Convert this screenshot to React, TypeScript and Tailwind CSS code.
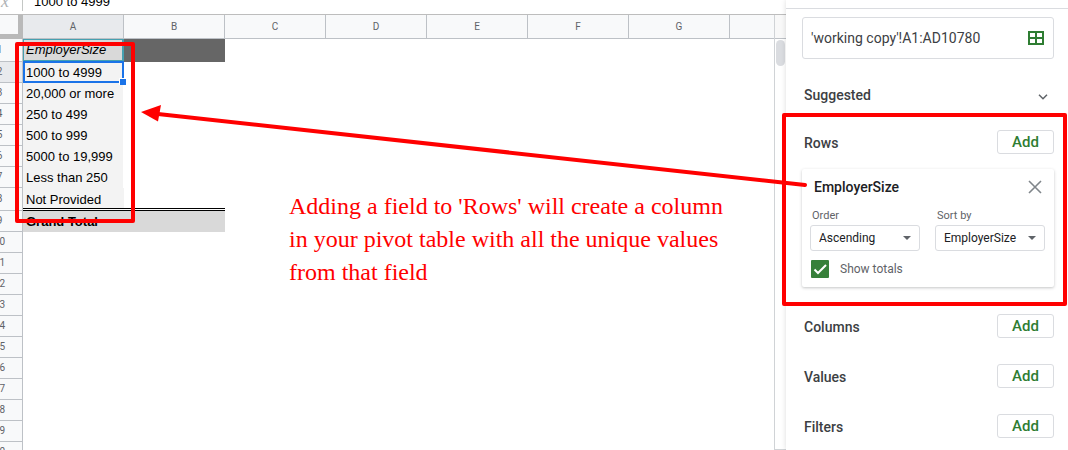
import React from "react";

const columns = ["A", "B", "C", "D", "E", "F", "G", "H"];

const values = [
  "1000 to 4999",
  "20,000 or more",
  "250 to 499",
  "500 to 999",
  "5000 to 19,999",
  "Less than 250",
  "Not Provided",
];

const emptyRows = [10, 11, 12, 13, 14, 15, 16, 17, 18, 19, 20];

function RowHeader({ n, active = false }: { n: number; active?: boolean }) {
  return (
    <th
      scope="row"
      className={`border-r border-b border-[#bdc1c6] p-0 text-center align-middle text-[10px] leading-3 font-normal text-[#5f6368] ${
        active ? "bg-[#e8eaed]" : "bg-[#f8f9fa]"
      }`}
    >
      {n}
    </th>
  );
}

function Sheet() {
  return (
    <div className="flex min-h-0 flex-1">
      <div className="min-w-0 flex-1 overflow-hidden">
        <table className="-ml-[23px] w-[854px] table-fixed border-separate border-spacing-0 font-['Liberation_Sans',Arial,sans-serif] text-[13px] leading-4 text-black">
          <colgroup>
            <col className="w-[46px]" />
            {columns.map((c) => (
              <col key={c} className="w-[101px]" />
            ))}
          </colgroup>
          <thead className="font-[Roboto,sans-serif]">
            <tr className="h-6">
              <td className="border-r-[5px] border-b-[5px] border-[#b9b9b9] bg-[#f8f9fa] p-0" />
              {columns.map((c) => (
                <th
                  key={c}
                  scope="col"
                  className={`border-r border-b border-[#bdc1c6] p-0 text-center align-middle text-[10px] leading-3 font-normal text-[#5f6368] ${
                    c === "A" ? "bg-[#e8eaed]" : "bg-[#f8f9fa]"
                  }`}
                >
                  {c}
                </th>
              ))}
            </tr>
          </thead>
          <tbody className="[&_th]:font-[Roboto,sans-serif]">
            <tr className="h-[23px]">
              <RowHeader n={1} />
              <td className="border border-r-2 border-b-2 border-[#46a0b0] bg-[#d9d9d9] px-0.5 py-0 align-middle italic">
                EmployerSize
              </td>
              <td className="bg-[#666666] p-0" />
              <td colSpan={6} className="p-0" />
            </tr>
            {values.map((value, i) => (
              <tr key={value} className={i === 6 ? "h-[23px]" : "h-[21px]"}>
                <RowHeader n={i + 2} active={i === 0} />
                <td
                  className={`relative bg-[#f3f3f3] bg-clip-padding px-[3px] py-0 ${
                    i === 6
                      ? "border-b-[3px] border-double border-black align-bottom"
                      : "border-r border-r-transparent align-middle"
                  }`}
                >
                  {value}
                  {i === 0 && (
                    <span className="absolute -top-px -right-px bottom-0 left-0 border-2 border-[#1a73e8]">
                      <span className="absolute -right-1 -bottom-1 z-10 size-[7px] border-t border-l border-white bg-[#1a73e8]" />
                    </span>
                  )}
                </td>
                <td className={i === 6 ? "border-b-[3px] border-double border-black p-0" : "p-0"} />
                <td colSpan={6} className="p-0" />
              </tr>
            ))}
            <tr className="h-[21px]">
              <RowHeader n={9} />
              <td className="bg-[#d9d9d9] px-[3px] py-0 align-middle font-bold">Grand Total</td>
              <td className="bg-[#d9d9d9] p-0" />
              <td colSpan={6} className="p-0" />
            </tr>
            {emptyRows.map((n) => (
              <tr key={n} className="h-[21px]">
                <RowHeader n={n} />
                <td colSpan={8} className="p-0" />
              </tr>
            ))}
          </tbody>
        </table>
      </div>
      <div className="w-3 shrink-0 border-b border-l border-[#d0d3d6]">
        <div className="h-6 border-b border-[#bdc1c6] bg-[#f8f8f8]" />
        <div className="mx-px mt-px h-[26px] rounded-full bg-[#dadce0]" />
      </div>
    </div>
  );
}

function FormulaBar() {
  return (
    <div className="flex h-[15px] shrink-0 items-end overflow-hidden border-b border-[#bdbdbd]">
      <div className="flex h-[26px] w-full items-center">
        <span className="-ml-2 flex h-5 w-[31px] items-center border-r border-[#c4c7c5] pl-1 font-['Liberation_Serif',serif] text-[18px] text-[#b0b3b6] italic">
          fx
        </span>
        <input
          aria-label="Formula"
          defaultValue="1000 to 4999"
          className="h-6 min-w-0 flex-1 pl-[11px] font-['Liberation_Sans',Arial,sans-serif] text-[13px] text-black outline-none"
        />
      </div>
    </div>
  );
}

function AddButton({ label }: { label: string }) {
  return (
    <button
      type="button"
      aria-label={`Add ${label}`}
      className="h-6 w-[57px] rounded-[3px] border border-[#dadce0] bg-white text-[15px] leading-5 font-medium text-[#2e7d32]"
    >
      Add
    </button>
  );
}

function Section({ title }: { title: string }) {
  return (
    <div className="flex h-6 items-center justify-between pl-0.5">
      <h2 className="pt-0.5 text-[14px] leading-5 font-medium text-[#3c4043]">{title}</h2>
      <AddButton label={title} />
    </div>
  );
}

function Dropdown({ id, label, value }: { id: string; label: string; value: string }) {
  return (
    <div className="flex w-[110px] flex-col gap-px">
      <label htmlFor={id} className="pt-0.5 pl-0.5 text-[11px] leading-4 text-[#5f6368]">
        {label}
      </label>
      <div className="relative">
        <select
          id={id}
          className="block h-[26px] w-full appearance-none rounded-[3px] border border-[#dadce0] bg-white pl-2 text-[12px] text-[#202124]"
        >
          <option>{value}</option>
        </select>
        <svg viewBox="0 0 8 4" className="pointer-events-none absolute top-[11px] right-[9px] h-1 w-2 fill-[#5f6368]">
          <path d="M0 0h8L4 4z" />
        </svg>
      </div>
    </div>
  );
}

function Editor() {
  return (
    <aside className="z-10 flex w-[282px] shrink-0 flex-col overflow-hidden bg-white font-[Roboto,sans-serif] shadow-[0_0_5px_rgba(0,0,0,0.14)]">
      <div className="h-[9px] shrink-0 border-b border-[#dadce0]" />
      <div className="flex flex-col px-4 pt-2 pr-3.5">
        <div className="flex h-[42px] items-center justify-between rounded-[3px] border border-[#dadce0] pr-[9px] pl-2">
          <input
            aria-label="Data range"
            defaultValue="'working copy'!A1:AD10780"
            className="h-6 min-w-0 flex-1 text-[14px] text-[#3c4043] outline-none"
          />
          <button type="button" aria-label="Select data range">
            <svg viewBox="0 0 16 14" className="h-3.5 w-4 fill-none stroke-[#2e7d32] stroke-2">
              <path d="M1 1h14v12H1zM8 1v12M1 7h14" />
            </svg>
          </button>
        </div>

        <div className="mt-6 flex h-6 items-center justify-between pr-1.5 pl-0.5">
          <h2 className="text-[14px] leading-5 font-medium text-[#3c4043]">Suggested</h2>
          <button type="button" aria-label="Expand suggested" className="pt-1">
            <svg viewBox="0 0 10 6" className="h-1.5 w-2.5 fill-none stroke-[#5f6368] stroke-[1.5]">
              <path d="M1 .8 5 4.8 9 .8" />
            </svg>
          </button>
        </div>

        <div className="mt-[23px]">
          <Section title="Rows" />
          <div className="mt-[15px] h-[118px] rounded-[2px] pr-[9px] pl-2 shadow-[0_1px_3px_rgba(60,64,67,0.3)]">
            <div className="flex h-9 items-center justify-between pr-[3px] pl-1">
              <h3 className="text-[14px] leading-5 font-medium text-[#202124]">EmployerSize</h3>
              <button type="button" aria-label="Remove EmployerSize">
                <svg viewBox="0 0 14 14" className="size-3.5 fill-none stroke-[#80868b] stroke-[1.6]">
                  <path d="M1 1l12 12M13 1L1 13" />
                </svg>
              </button>
            </div>
            <div className="mt-px flex justify-between">
              <Dropdown id="order" label="Order" value="Ascending" />
              <Dropdown id="sort" label="Sort by" value="EmployerSize" />
            </div>
            <label className="relative mt-[9px] ml-px flex items-center gap-[11px] text-[12px] leading-4 text-[#5f6368]">
              <input
                type="checkbox"
                defaultChecked
                className="size-[18px] appearance-none rounded-[1px] bg-white checked:bg-[#37803a]"
              />
              <svg viewBox="0 0 18 18" className="pointer-events-none absolute left-0 size-[18px] fill-none stroke-white stroke-2">
                <path d="M3.5 9.5 7 13 15 5" />
              </svg>
              Show totals
            </label>
          </div>
        </div>

        <div className="mt-[27px] flex flex-col gap-[26px]">
          <Section title="Columns" />
          <Section title="Values" />
          <Section title="Filters" />
        </div>
      </div>
    </aside>
  );
}

function Annotations() {
  return (
    <div className="pointer-events-none absolute inset-0 z-20">
      <svg className="absolute inset-0 size-full fill-none stroke-[#ff0000] stroke-4" strokeLinejoin="round">
        <rect x="17" y="44" width="116" height="177" />
        <rect x="784" y="115" width="281" height="189" />
        <path d="M805 185 158 114" strokeLinecap="round" />
        <path d="M141 112 161 105 158 121.5Z" className="fill-[#ff0000] stroke-none" />
      </svg>
      <p className="absolute top-[190px] left-[289px] w-[450px] font-['Liberation_Serif','Times_New_Roman',serif] text-[24px] leading-[33px] text-[#ff0000]">
        Adding a field to 'Rows' will create a column in your pivot table with all the unique values from that field
      </p>
    </div>
  );
}

export default function App() {
  return (
    <div className="relative flex h-screen w-full overflow-hidden bg-white">
      <main className="flex min-w-0 flex-1 flex-col">
        <FormulaBar />
        <Sheet />
      </main>
      <Editor />
      <Annotations />
    </div>
  );
}
